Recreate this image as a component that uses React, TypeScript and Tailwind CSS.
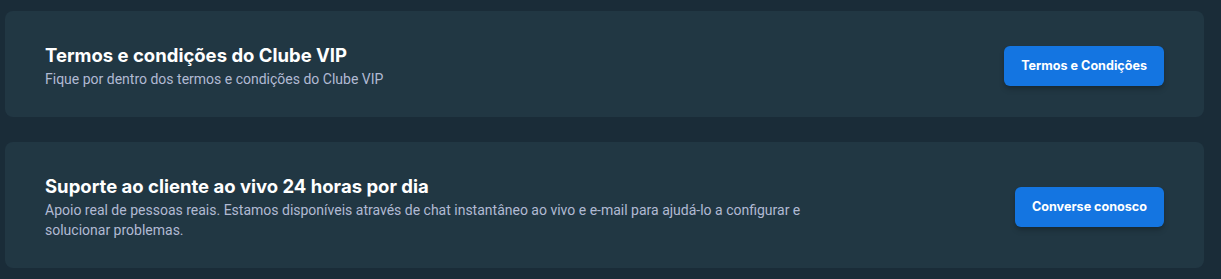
import React from 'react';

interface InfoCardProps {
  title: string;
  description: string;
  action: string;
}

function InfoCard({ title, description, action }: InfoCardProps) {
  return (
    <div className="flex items-center justify-between rounded-lg bg-[#213743] pb-7 pl-10 pr-10 pt-8">
      <div className="max-w-[780px]">
        <h3 className="text-[18.5px] font-bold leading-6 text-white" style={{ fontFamily: 'Inter, sans-serif' }}>
          {title}
        </h3>
        <p className="mt-0.5 text-[14px] leading-5 text-[#b1bad3]" style={{ fontFamily: 'Roboto, Arial, sans-serif' }}>
          {description}
        </p>
      </div>
      <button
        className="h-10 shrink-0 rounded-md bg-[#1475e1] px-[17px] text-[12.6px] font-bold text-white shadow-[0_4px_6px_-1px_rgba(0,0,0,0.2),0_2px_4px_-2px_rgba(0,0,0,0.2)]"
        style={{ fontFamily: 'Inter, sans-serif' }}
      >
        {action}
      </button>
    </div>
  );
}

export default function App() {
  return (
    <div className="min-h-[279px] bg-[#1a2c38] pl-[5px] pr-[17px] pt-[11px]">
      <div className="flex flex-col gap-[25px]">
        <InfoCard
          title="Termos e condições do Clube VIP"
          description="Fique por dentro dos termos e condições do Clube VIP"
          action="Termos e Condições"
        />
        <InfoCard
          title="Suporte ao cliente ao vivo 24 horas por dia"
          description="Apoio real de pessoas reais. Estamos disponíveis através de chat instantâneo ao vivo e e-mail para ajudá-lo a configurar e solucionar problemas."
          action="Converse conosco"
        />
      </div>
    </div>
  );
}
